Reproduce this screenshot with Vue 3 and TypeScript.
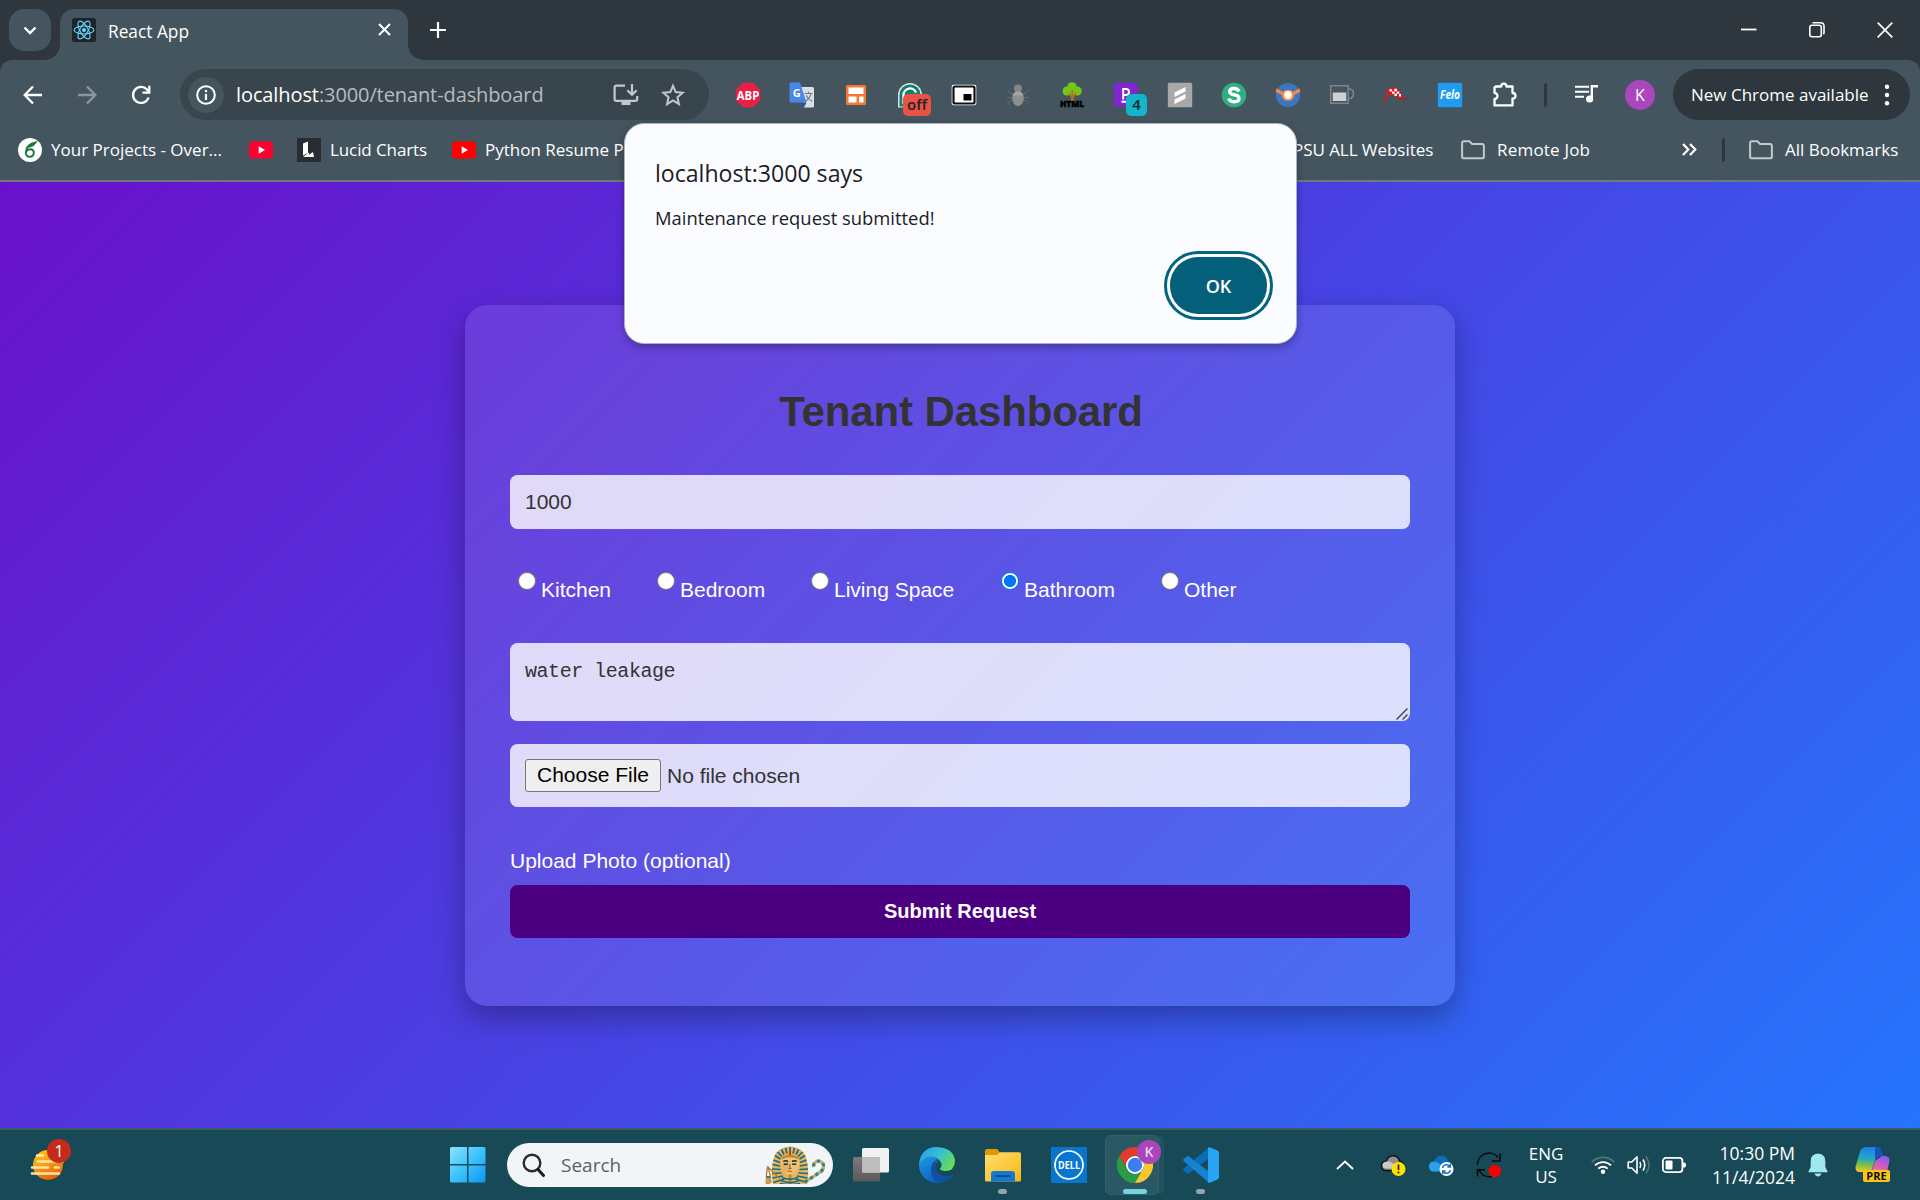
<script setup lang="ts">
import { ref } from 'vue'

interface Room {
  id: string
  label: string
  width: number
}

const rooms: Room[] = [
  { id: 'kitchen', label: 'Kitchen', width: 139 },
  { id: 'bedroom', label: 'Bedroom', width: 154 },
  { id: 'living', label: 'Living Space', width: 190 },
  { id: 'bathroom', label: 'Bathroom', width: 160 },
  { id: 'other', label: 'Other', width: 100 },
]
const selected = ref('bathroom')
const amount = ref('1000')
const details = ref('water leakage')
</script>

<template>
  <div class="screen">
    <header class="tabstrip">
      <button class="tab-search">
        <svg width="14" height="9" viewBox="0 0 14 9"><path d="M1.500 1.500 7 7l5.500-5.500" fill="none" stroke="#fff" stroke-width="2.400" /></svg>
      </button>
      <div class="tab">
        <svg class="favicon" width="24" height="24" viewBox="0 0 24 24">
          <rect width="24" height="24" rx="2.500" fill="#20232a" />
          <g fill="none" stroke="#61dafb" stroke-width="1.100">
            <ellipse cx="12" cy="12" rx="10" ry="4" />
            <ellipse cx="12" cy="12" rx="10" ry="4" transform="rotate(60 12 12)" />
            <ellipse cx="12" cy="12" rx="10" ry="4" transform="rotate(120 12 12)" />
          </g>
          <circle cx="12" cy="12" r="2" fill="#61dafb" />
        </svg>
        <span class="tab-title">React App</span>
        <svg class="tab-close" width="13" height="13" viewBox="0 0 13 13"><path d="M1 1l11 11M12 1 1 12" stroke="#fff" stroke-width="2" /></svg>
      </div>
      <svg class="new-tab" width="16" height="16" viewBox="0 0 16 16"><path d="M8 0v16M0 8h16" stroke="#fff" stroke-width="2.200" /></svg>
      <div class="window-controls">
        <svg width="16" height="16" viewBox="0 0 16 16"><path d="M0 7.500h15.500" stroke="#fff" stroke-width="1.800" /></svg>
        <svg width="16" height="16" viewBox="0 0 16 16"><g fill="none" stroke="#fff" stroke-width="1.600"><rect x=".8" y="3.300" width="11.500" height="11.500" rx="2.200" /><path d="M3.500 1.200Q4 .8 5 .8h6.500q3.500 0 3.500 3.500v6.200q0 1-.6 1.700" /></g></svg>
        <svg width="16" height="16" viewBox="0 0 16 16"><path d="M.7.700l14.600 14.600M15.300.700.700 15.300" stroke="#fff" stroke-width="1.700" /></svg>
      </div>
    </header>

    <nav class="toolbar">
      <div class="nav-buttons">
        <svg width="20" height="20" viewBox="0 0 20 20"><path d="M19 10H2M10 1.500 1.700 10l8.300 8.500" fill="none" stroke="#fff" stroke-width="2.300" /></svg>
        <svg width="20" height="20" viewBox="0 0 20 20"><path d="M1 10h17M10 1.500l8.300 8.500-8.300 8.500" fill="none" stroke="#8d989e" stroke-width="2.300" /></svg>
        <svg width="20" height="20" viewBox="0 0 20 20"><path d="M17.600 12.500A8 8 0 1 1 16 4.600l2 2.200" fill="none" stroke="#fff" stroke-width="2.300" /><path d="M18.300.800v6.900h-6.900" fill="none" stroke="#fff" stroke-width="2.200" /></svg>
      </div>
      <div class="omnibox">
        <span class="site-info">
          <svg width="20" height="20" viewBox="0 0 20 20"><circle cx="10" cy="10" r="8.800" fill="none" stroke="#fff" stroke-width="2" /><path d="M10 9v6M10 5v2.200" stroke="#fff" stroke-width="2.200" /></svg>
        </span>
        <span class="url"><b>localhost</b>:3000/tenant-dashboard</span>
        <svg class="install" width="26" height="22" viewBox="0 0 26 22"><g fill="none" stroke="#c4c8ca" stroke-width="2.200"><path d="M12 1.600H3.500q-1.900 0-1.900 1.900v11.500q0 1.900 1.900 1.900h18.800q1.900 0 1.900-1.900V12" /><path d="M19 0v10M14.300 6.200 19 10.800l4.700-4.600" /></g><path d="M8.500 17h9v4h-9z" fill="#c4c8ca" /></svg>
        <svg class="star" width="24" height="24" viewBox="0 0 24 24"><path d="M12 2.800l2.700 6.300 6.900.6-5.200 4.600 1.500 6.800L12 17.500l-5.900 3.600 1.500-6.800-5.200-4.600 6.900-.6z" fill="none" stroke="#c4c8ca" stroke-width="2" /></svg>
      </div>
      <div class="extensions">
        <span class="ext">
          <svg width="26" height="26" viewBox="0 0 26 26"><path d="M8 .7h10L25.300 8v10L18 25.300H8L.7 18V8z" fill="#ed1e45" /><text x="13" y="17.600" text-anchor="middle" font-size="12.500" font-weight="700" fill="#fff" textLength="22.500" lengthAdjust="spacingAndGlyphs">ABP</text></svg>
        </span>
        <span class="ext">
          <svg width="26" height="26" viewBox="0 0 26 26"><path d="M9 5h14.500q1.500 0 1.500 1.500V24q0 1.500-1.500 1.500H15z" fill="#dcdfe2" /><path d="M2 .5h9l6.500 20H2Q.5 20.500.5 19V2Q.5.500 2 .5z" fill="#4a86e8" /><path d="M12.500 20.500h5L15 25.500z" fill="#2b4fb0" /><path d="M15.500 11.500h8M19.500 9.500v2M22 11.500q-1 5-6 8M17.200 13.500q2 4 6 5.800" fill="none" stroke="#607d8b" stroke-width="1.200" /><text x="7.800" y="15" text-anchor="middle" font-size="11" font-weight="700" fill="#fff">G</text></svg>
        </span>
        <span class="ext">
          <svg width="20" height="20" viewBox="0 0 20 20"><rect width="20" height="20" rx="1" fill="#f27a35" /><path d="M2.500 2.500h15V9h-15zM2.500 11.500h8v6h-8zM13 11.500h4.500v6H13z" fill="#fff" /></svg>
        </span>
        <span class="ext">
          <svg width="26" height="26" viewBox="0 0 26 26"><path d="M1 25.500V13a12 12 0 0 1 24 0v12z" fill="#d9e5e2" /><path d="M2.500 24.500V13a10.500 10.500 0 0 1 21 0v11z" fill="#0f7f6e" /><path d="M6.500 22v-9a6.500 6.500 0 0 1 12.500-2.500" fill="none" stroke="#fff" stroke-width="2.300" /></svg>
          <i class="badge off">off</i>
        </span>
        <span class="ext">
          <svg width="26" height="22" viewBox="0 0 26 22"><rect x=".7" y=".7" width="24.600" height="20.600" rx="2" fill="#fff" /><rect x="2.500" y="2.500" width="21" height="17" rx="1.500" fill="#fff" stroke="#111" stroke-width="2.200" /><path d="M12.500 10h8v6.500h-8z" fill="#000" /></svg>
        </span>
        <span class="ext">
          <svg width="22" height="24" viewBox="0 0 22 24"><g fill="none" stroke="#626c71" stroke-width="1"><path d="M1 7q1 4 5 4M21 7q-1 4-5 4M0 14.500h6M22 14.500h-6M1 22q0-4 5-5M21 22q0-4-5-5" /></g><circle cx="11" cy="5.500" r="4" fill="#858585" /><ellipse cx="11" cy="15.500" rx="5.800" ry="7.500" fill="#8e8e8e" /><path d="M5.500 12.500Q7 8.500 11 8.500t5.500 4z" fill="#a5a5a5" /></svg>
        </span>
        <span class="ext">
          <svg width="26" height="26" viewBox="0 0 26 26"><g fill="#76c51a"><circle cx="13" cy="5" r="4.800" /><circle cx="8" cy="9" r="4.500" /><circle cx="18.300" cy="9" r="4.500" /><circle cx="13" cy="10" r="4" /></g><path d="M9 10l3.500 3V8h1.500v5l4-3.500-3 6.500v3h-3v-3z" fill="#b96b1c" /><text x="13" y="24.800" text-anchor="middle" font-size="8.500" font-weight="900" fill="#000" textLength="24" lengthAdjust="spacingAndGlyphs" stroke="#000" stroke-width=".5">HTML</text></svg>
        </span>
        <span class="ext">
          <svg width="26" height="26" viewBox="0 0 26 26"><rect x=".8" y=".8" width="24" height="24" rx="3" fill="#7f26cf" /><path d="M10.200 17.500V7h2.800q3 0 3 3t-3 3h-2.500M8.500 19.800h5" fill="none" stroke="#fff" stroke-width="2" /></svg>
          <i class="badge four">4</i>
        </span>
        <span class="ext">
          <svg width="26" height="26" viewBox="0 0 26 26"><rect x=".8" y=".8" width="24.400" height="24.400" rx="1.500" fill="#a8a8a8" /><path d="M18.500 5v4.500L7.500 15v-4.500zM18.500 12v4.500L7.500 22v-4.500z" fill="#fff" /></svg>
        </span>
        <span class="ext">
          <svg width="26" height="26" viewBox="0 0 26 26"><circle cx="13" cy="13" r="12.300" fill="#2fae80" /><path d="M18 9.500q-1.300-3-5-3-4.300 0-4.300 3.100 0 2.400 4.300 3.200 5 .8 5 3.700 0 3.200-5 3.200-4.200 0-5.300-3.200" fill="none" stroke="#fff" stroke-width="3.400" /></svg>
        </span>
        <span class="ext">
          <svg width="26" height="26" viewBox="0 0 26 26"><circle cx="13" cy="13" r="12" fill="#3a77c2" /><path d="M1.500 6.500 8 9.800q2-2 5-2t5 2l6.500-3.300 1 3.300-6 3q-.5 6.200-6.500 6.200t-6.500-6.200l-6-3z" fill="#f58a42" /><circle cx="13" cy="13" r="3.900" fill="#fff" /></svg>
        </span>
        <span class="ext">
          <svg width="26" height="22" viewBox="0 0 26 22"><path d="M1.700 1.700h17.500v17.500H1.700z" fill="none" stroke="#7e8588" stroke-width="1.500" /><path d="M3.800 8.500h13.500V17H3.800z" fill="#d0d0d0" /><path d="M19 5q5.500-.5 5.500 4.500T19 15" fill="none" stroke="#7e8588" stroke-width="1.600" /></svg>
        </span>
        <span class="ext">
          <svg width="26" height="18" viewBox="0 0 26 18"><path d="M5 3Q11-1 16.500 4.500L19.500 12q-4 .5-7.500-2T5.500 9L2 15.500H.8z" fill="#e3141b" /><g fill="#fff"><path d="M6.500 3.200h2.600v2.400H6.500zM11.300 2.800h2.600v2.400h-2.600zM9 5.400h2.600v2.400H9zM13.700 5.400h2.600v2.400h-2.600zM11.400 7.800H14v2.200h-2.600zM16 8h2v2.400h-2z" /></g><path d="M15 12q4.500 2.300 10 .8" fill="none" stroke="#b01f27" stroke-width="1.700" /></svg>
        </span>
        <span class="ext">
          <svg width="26" height="26" viewBox="0 0 26 26"><rect x=".8" y=".8" width="24.400" height="24.400" rx="1.500" fill="#1f9cf0" /><text x="13" y="17.200" text-anchor="middle" font-size="11.500" font-weight="700" font-style="italic" fill="#fff" textLength="20" lengthAdjust="spacingAndGlyphs">Felo</text></svg>
        </span>
        <span class="ext">
          <svg width="26" height="26" viewBox="0 0 26 26"><path d="M4.500 4.500h5.700q0-2.800 2.600-2.800t2.600 2.800h6.100v6.500q3 0 3 2.800t-3 2.800v6.800h-18v-6.200q3-.6 3-3.200t-3-3.200V5.500z" fill="none" stroke="#fff" stroke-width="2.300" stroke-linejoin="round" /></svg>
        </span>
      </div>
      <span class="divider tool-divider"></span>
      <svg class="media" width="24" height="19" viewBox="0 0 24 19"><path d="M0 1.700h14M0 6.700h14M0 11.700h9" stroke="#fff" stroke-width="2" /><path d="M16.800 14V1.300H23" fill="none" stroke="#fff" stroke-width="2.400" /><circle cx="14.600" cy="14" r="3.600" fill="#fff" /></svg>
      <span class="profile">K</span>
      <div class="update">
        <span>New Chrome available</span>
        <svg width="6" height="22" viewBox="0 0 6 22"><g fill="#fff"><circle cx="3" cy="2.700" r="2.200" /><circle cx="3" cy="11" r="2.200" /><circle cx="3" cy="19.300" r="2.200" /></g></svg>
      </div>
    </nav>

    <div class="bookmarks">
      <svg class="bm-overleaf" width="24" height="24" viewBox="0 0 24 24"><circle cx="12" cy="12" r="12" fill="#fff" /><path d="M17.500 4.500Q8 6.500 7.800 14.500q.2 4.300 4 4.300t4-3.900q0-3.700-3.600-3.700-3 0-4.200 3M10 8.500q3-3 7.500-4-2 3.300-5.500 4z" fill="none" stroke="#1a7a3c" stroke-width="1.900" /></svg>
      <span class="bm-projects">Your Projects - Over...</span>
      <svg class="bm-yt" width="24" height="18" viewBox="0 0 24 18"><rect y=".5" width="24" height="17" rx="4" fill="#ff0033" /><path d="M9.700 5.200v7.600L16 9z" fill="#fff" /></svg>
      <svg class="bm-lucid" width="24" height="24" viewBox="0 0 24 24"><path d="M0 0h24v24H0z" fill="#282c33" /><path d="M6 5.500 11 3.500V15l-5 2.500zM6 19l6-4.500v2.300l4-2.800 1 5z" fill="#fff" /></svg>
      <span class="bm-charts">Lucid Charts</span>
      <svg class="bm-yt2" width="24" height="18" viewBox="0 0 24 18"><rect y=".5" width="24" height="17" rx="3.500" fill="#f00" /><path d="M9.700 5.200v7.600L16 9z" fill="#fff" /></svg>
      <span class="bm-python">Python Resume P</span>
      <span class="bm-psu">PSU ALL Websites</span>
      <svg class="folder" width="24" height="20" viewBox="0 0 24 20"><path d="M3 1.300h5.500L11 4h10q1.900 0 1.900 1.900v10.500q0 1.900-1.900 1.900H3q-1.900 0-1.900-1.900V3.200Q1.100 1.300 3 1.300z" fill="none" stroke="#c4c8ca" stroke-width="2" /></svg>
      <span class="bm-remote">Remote Job</span>
      <svg class="chevrons" width="15" height="13" viewBox="0 0 15 13"><path d="M1 1l5.300 5.500L1 12M8 1l5.300 5.500L8 12" fill="none" stroke="#fff" stroke-width="2.200" /></svg>
      <span class="divider"></span>
      <svg class="folder all" width="24" height="20" viewBox="0 0 24 20"><path d="M3 1.300h5.500L11 4h10q1.900 0 1.900 1.900v10.500q0 1.900-1.900 1.900H3q-1.900 0-1.900-1.900V3.200Q1.100 1.300 3 1.300z" fill="none" stroke="#c4c8ca" stroke-width="2" /></svg>
      <span class="bm-all">All Bookmarks</span>
    </div>

    <main class="page">
      <section class="card">
        <h1>Tenant Dashboard</h1>
        <input v-model="amount" class="field amount" type="text" />
        <div class="rooms">
          <label v-for="room in rooms" :key="room.id" :style="{ width: room.width + 'px' }" @click="selected = room.id">
            <i class="radio" :class="{ on: selected === room.id }"></i>
            <span>{{ room.label }}</span>
          </label>
        </div>
        <div class="field details">
          <span>{{ details }}</span>
          <svg width="12" height="12" viewBox="0 0 12 12"><path d="M.5 11.500 11.500.5M6.500 11.500l5-5" stroke="#4a4a55" stroke-width="1.500" /></svg>
        </div>
        <div class="field file">
          <button class="choose">Choose File</button>
          <span>No file chosen</span>
        </div>
        <p class="upload">Upload Photo (optional)</p>
        <button class="submit">Submit Request</button>
      </section>
    </main>

    <footer class="taskbar">
      <span class="weather">
        <svg width="34" height="32" viewBox="0 0 34 32">
          <defs><linearGradient id="sun" x1="0" y1="0" x2=".5" y2="1"><stop offset="0" stop-color="#ffc81a" /><stop offset=".5" stop-color="#f9a012" /><stop offset="1" stop-color="#e8640a" /></linearGradient></defs>
          <circle cx="18" cy="16" r="15" fill="url(#sun)" />
          <g stroke="#ffe3a8" stroke-width="2.600" stroke-linecap="round"><path d="M7 6.500h6M8 12.500h27M2 18.500h16M25 18.500h4M2 24.500h27" /></g>
        </svg>
        <i class="count">1</i>
      </span>
      <svg class="start" width="36" height="36" viewBox="0 0 36 36">
        <defs><linearGradient id="win" x1="0" y1="0" x2="1" y2="1"><stop offset="0" stop-color="#8ce3ff" /><stop offset=".5" stop-color="#3cc3fb" /><stop offset="1" stop-color="#0a97f5" /></linearGradient></defs>
        <path d="M1.500 0H17v17H0V1.500Q0 0 1.500 0zM18.500 0h15.500q1.500 0 1.500 1.500V17h-17zM0 18.500h17v17H1.500Q0 35.500 0 34zM18.500 18.500h17V34q0 1.500-1.500 1.500H18.500z" fill="url(#win)" />
      </svg>
      <div class="search">
        <svg width="24" height="24" viewBox="0 0 24 24"><circle cx="10" cy="10" r="8.300" fill="none" stroke="#2b2b2b" stroke-width="2.400" /><path d="M16 16.500l5.500 6" stroke="#1d1d1d" stroke-width="3" stroke-linecap="round" /></svg>
        <span>Search</span>
        <svg class="pharaoh" width="60" height="38" viewBox="0 0 60 38">
          <path d="M8 38Q6 30 7 22 8 8 14 4 19 .5 25 .5T36 4q6 4 7 18 1 8-1 16z" fill="#e3b45a" />
          <g fill="none" stroke="#1b6a86" stroke-width="1.700">
            <path d="M25 7V1M22 7.500 20.500 2M28 7.500 29.500 2M19 8.500 16.500 3.500M31 8.500l2.500-5M17 10.500 12.500 6M33 10.500 37.500 6" />
            <path d="M15.500 13 10 9.500M34.500 13 40 9.500M15 16.500 8.500 14M35 16.500l6.500-2.500M15 20l-7.500-1.500M35 20l7.500-1.500M15.500 23.500 7 23M34.500 23.500 43 23M16.500 27 7 27.500M33.500 27l9.500.5M18 30 7.500 32M32 30l10.500 2M19.500 33 8 36.500M30.500 33 42 36.500" />
          </g>
          <path d="M17 11q8-4.500 16 0l.8 4q.8 7-3.300 11-2.500 2.800-5.500 2.800T19.500 26q-4.100-4-3.300-11z" fill="#efc27a" />
          <path d="M16.800 11q8.200-5 16.400 0v2.300q-8.200-4-16.400 0z" fill="#c2872b" />
          <path d="M25 15v10q-4 0-4 2.500Q17 25 16.500 18z" fill="#dba45a" opacity=".6" />
          <path d="M18.300 15.500q2.300-1.500 4.700 0M27 15.500q2.400-1.500 4.700 0M18.800 18.300h4M27.200 18.300h4" fill="none" stroke="#1c2f3a" stroke-width="1.500" />
          <path d="M25 18v4.500M23.500 22.500h3M22.800 25.300h4.400" stroke="#9c6420" stroke-width="1.100" />
          <path d="M25 4v5" stroke="#c0392b" stroke-width="2" />
          <path d="M23.500 28.500h3V38h-3z" fill="#c2872b" />
          <path d="M17 31.500q8 3.500 16 0M16 34.500q9 4 18 0M15 37.500q10 2 20 0" fill="none" stroke="#1b6a86" stroke-width="1.400" />
          <path d="M2.500 20.500l12 12M2.500 20.500Q1 28 1.500 37M3 21q2.500 7 3 16" fill="none" stroke="#b7792d" stroke-width="1.300" />
          <path d="M1 30.500h4.500V38H.5z" fill="#cf9a4c" />
          <path d="M1 31h4.500" stroke="#1b6a86" stroke-width="1.500" />
          <path d="M40 36 56 25.500q4.500-4.500 1.500-8.500-4-3.500-7.500-.5-2 2-1 4.500" fill="none" stroke="#d8aa4a" stroke-width="3.200" />
          <path d="M40 36 56 25.500q4.500-4.500 1.500-8.500-4-3.500-7.500-.5-2 2-1 4.500" fill="none" stroke="#1f86a8" stroke-width="3.200" stroke-dasharray="3 3.300" />
        </svg>
      </div>
      <div class="apps">
        <span class="app">
          <svg width="36" height="36" viewBox="0 0 36 36"><defs><linearGradient id="tvb" x1="0" y1="0" x2="0" y2="1"><stop offset="0" stop-color="#7b7b7b" /><stop offset="1" stop-color="#5a5a5a" /></linearGradient></defs><rect y="10" width="27" height="24.500" rx="1.500" fill="url(#tvb)" /><rect x="9" y="1" width="27" height="24.500" rx="1.500" fill="#f1f1f1" /><path d="M9 10h18v15.500H10.500Q9 25.500 9 24z" fill="#bdbdbd" /></svg>
        </span>
        <span class="app">
          <svg width="36" height="36" viewBox="0 0 36 36">
            <defs>
              <linearGradient id="eg1" x1="0" y1=".2" x2="1" y2=".7"><stop offset="0" stop-color="#28a2ea" /><stop offset=".5" stop-color="#35c1cf" /><stop offset="1" stop-color="#6be04c" /></linearGradient>
              <linearGradient id="eg2" x1="0" y1="0" x2=".5" y2="1"><stop offset="0" stop-color="#1b9be4" /><stop offset="1" stop-color="#0f62bd" /></linearGradient>
            </defs>
            <path d="M0 17Q3 8 12 9q7 1.500 6.500 6-6 4-3 11 3 6 10 8-3 2-7.500 2A18 18 0 0 1 0 17z" fill="url(#eg2)" />
            <path d="M12 21q.5-6.500 6.500-8-3 4-1.500 9 3 7 10.500 7 3.500 0 6-1.600 1.600-.4.800 1.100Q29 36 20 36q-8.500-4-8-15z" fill="#124f9c" />
            <path d="M0 17Q2 0 18 0q17 1 18 14-.5 10-9.500 10-5.500-.3-5.500-2.500 2.500-2.500 1-6Q18.500 9.500 11.500 9.500 3 10.500 0 17z" fill="url(#eg1)" />
          </svg>
        </span>
        <span class="app">
          <svg width="36" height="36" viewBox="0 0 36 36"><defs><linearGradient id="fo" x1="0" y1="0" x2="1" y2="1"><stop offset="0" stop-color="#ffdd70" /><stop offset="1" stop-color="#f8b713" /></linearGradient></defs><path d="M0 4q0-2 2-2h9q1.500 0 2.300 1.200L15 6v5H0z" fill="#dc9a0b" /><path d="M0 8h12l3-2.700h19.500Q36 5.300 36 7v26q0 1.500-1.500 1.500h-33Q0 34.500 0 33z" fill="url(#fo)" /><path d="M6 34.500V27q0-3 3-3h18q3 0 3 3v7.500z" fill="#1379d0" /><path d="M11 29h14" stroke="#0d4f94" stroke-width="1.800" stroke-linecap="round" /></svg>
          <i class="dot"></i>
        </span>
        <span class="app">
          <svg width="36" height="36" viewBox="0 0 36 36"><path d="M0 0h36v36H0z" fill="#0676ce" /><circle cx="18" cy="18" r="14" fill="none" stroke="#fff" stroke-width="1.700" /><text x="18" y="22" text-anchor="middle" font-size="11" font-weight="700" fill="#fff" textLength="22" lengthAdjust="spacingAndGlyphs">DELL</text></svg>
        </span>
        <span class="app active">
          <svg width="36" height="36" viewBox="0 0 36 36"><path d="M18 9h15.600A18 18 0 0 0 2.400 9l7.800 13.500A9 9 0 0 1 18 9z" fill="#e33b2e" /><path d="M10.200 22.500 2.400 9A18 18 0 0 0 18 36l7.800-13.500a9 9 0 0 1-15.600 0z" fill="#2b9b47" /><path d="M25.800 22.500 18 36A18 18 0 0 0 33.600 9H18a9 9 0 0 1 7.800 13.500z" fill="#fcc52c" /><circle cx="18" cy="18" r="9" fill="#fff" /><circle cx="18" cy="18" r="7.200" fill="#3c7df0" /></svg>
          <i class="app-badge">K</i>
          <i class="dot wide"></i>
        </span>
        <span class="app">
          <svg width="36" height="36" viewBox="0 0 36 36"><path d="M26 .3v11L5 27 .8 24q-1.300-1.200 0-2.400z" fill="#0a6cb5" /><path d="M.8 11.800 5 8.800l21 16V35.700L.8 14.200q-1.300-1.200 0-2.400z" fill="#1583cf" /><path d="M26 0l8.500 3.500Q36 4.200 36 6v24q0 1.800-1.500 2.500L26 36q-.8-.3-1-1V1q.2-.7 1-1z" fill="#27a5f2" /></svg>
          <i class="dot"></i>
        </span>
      </div>
      <div class="tray">
        <span class="slot"><svg width="18" height="10" viewBox="0 0 18 10"><path d="M1 9l8-7.500L17 9" fill="none" stroke="#fff" stroke-width="1.900" /></svg></span>
        <span class="slot"><svg width="26" height="22" viewBox="0 0 26 22"><path d="M6 16.500q-4.500-.5-4.500-4.800T6.300 7.200Q8 1.500 13.500 1.700q5 .3 6 5.300 4 .8 4 5t-4 4.500z" fill="#8f8f8f" stroke="#111" stroke-width="1.500" /><path d="M6.500 7.500q7-1 10 7H6q-3.500-.5-3.500-3.300t4-3.700z" fill="#c9c9c9" /><circle cx="18.500" cy="15" r="7" fill="#fde100" /><path d="M18.500 10.500v5.500M18.500 17.500v2" stroke="#222" stroke-width="1.700" /></svg></span>
        <span class="slot"><svg width="26" height="22" viewBox="0 0 26 22"><path d="M6 17.500q-5-.5-5-5t5-5Q8 1.500 13.500 1.700 19 2 20 7q4 1 4 5.500z" fill="#0f6cbd" /><path d="M5 17.500q-4-.7-4-5t5-5q3 0 5 2l9 6v2z" fill="#28a0ea" /><circle cx="18.500" cy="15" r="7" fill="#fff" /><path d="M14.500 14a4.200 4.200 0 0 1 7.500-1.500M22.500 16a4.200 4.200 0 0 1-7.500 1.500M22.300 10v3h-3M14.700 20v-3h3" fill="none" stroke="#1a6fc0" stroke-width="1.500" /></svg></span>
        <span class="slot"><svg width="26" height="26" viewBox="0 0 26 26"><path d="M1.500 12.500A11.500 11.500 0 0 1 22 5.500M24 1.500V9h-8M16 24.500Q7 26 3 18M1.500 24.500v-6.700h7.500" fill="none" stroke="#0b0b0b" stroke-width="1.600" /><circle cx="18.800" cy="19" r="6.200" fill="#f80000" /></svg></span>
        <span class="lang"><span>ENG</span><span>US</span></span>
        <svg class="wifi" width="24" height="18" viewBox="0 0 24 18"><g fill="none" stroke-width="1.800"><path d="M.8 6.200a15.500 15.500 0 0 1 22.400 0" stroke="#54767f" /><path d="M4 9.400a11.200 11.200 0 0 1 16 0M7.300 12.700a6.600 6.600 0 0 1 9.400 0" stroke="#fff" /></g><circle cx="12" cy="15.700" r="2.200" fill="#fff" /></svg>
        <svg class="speaker" width="24" height="20" viewBox="0 0 24 20"><g fill="none" stroke-width="1.600"><path d="M1.200 7h3.600L10 1.800v16.400L4.800 13H1.200z" stroke="#fff" stroke-linejoin="round" /><path d="M13 7q1.500 3 0 6M16 4.500q3.500 5.500 0 11" stroke="#fff" /><path d="M19 1.500q6 8.500 0 17" stroke="#54767f" /></g></svg>
        <svg class="battery" width="25" height="16" viewBox="0 0 25 16"><rect x=".9" y=".9" width="19.500" height="14.200" rx="3" fill="none" stroke="#fff" stroke-width="1.800" /><rect x="3.500" y="3.500" width="7" height="9" rx="1" fill="#fff" /><path d="M21 5.500h1.300q1.700 0 1.700 2.500t-1.700 2.500H21z" fill="#fff" /></svg>
        <span class="clock"><span>10:30 PM</span><span>11/4/2024</span></span>
        <svg class="bell" width="20" height="24" viewBox="0 0 20 24"><path d="M10 .5q7.300.5 7.300 7.500v6l2.200 4.500v.8H.5v-.8L2.700 14V8Q2.700 1 10 .5z" fill="#9fe9ee" /><path d="M6.500 20.500h7q-1 3-3.500 3t-3.500-3z" fill="#9fe9ee" /></svg>
        <span class="copilot">
          <svg width="36" height="36" viewBox="0 0 36 36">
            <defs>
              <linearGradient id="cp1" x1=".3" y1="0" x2=".2" y2="1"><stop offset="0" stop-color="#1d7fe6" /><stop offset=".45" stop-color="#22a6c8" /><stop offset=".7" stop-color="#7ac043" /><stop offset="1" stop-color="#f6c928" /></linearGradient>
              <linearGradient id="cp2" x1=".6" y1="0" x2=".3" y2="1"><stop offset="0" stop-color="#8a5cf0" /><stop offset=".5" stop-color="#e05bb5" /><stop offset="1" stop-color="#fb9a5c" /></linearGradient>
            </defs>
            <path d="M27 9h3q5 .5 4.500 5l-3 13q-1 3-5 3H15l5-16z" fill="url(#cp2)" />
            <path d="M11 0h11q3 .5 4 4l1.500 5H24q-3 .5-4 4l-3 9q-1 3-4 3H5q-5 0-4.500-5L4.500 6Q6 0 11 0z" fill="url(#cp1)" />
            <path d="M20 0h2q3 .5 4 4l1.500 5H24q-3 .2-4 3z" fill="#1b4fc4" />
          </svg>
          <i class="pre">PRE</i>
        </span>
      </div>
    </footer>

    <div class="dialog" role="dialog">
      <h2>localhost:3000 says</h2>
      <p>Maintenance request submitted!</p>
      <button class="ok">OK</button>
    </div>
  </div>
</template>

<style>
html,
body {
  margin: 0;
  overflow: hidden;
}
</style>

<style scoped>
.screen {
  position: relative;
  display: flex;
  flex-direction: column;
  width: 1920px;
  height: 1200px;
  overflow: hidden;
  color: #fff;
  background: #2d373d;
  font-family: 'Open Sans', 'Noto Sans', sans-serif;
}
.screen *,
.screen *::before {
  box-sizing: border-box;
}
svg {
  display: block;
  flex: none;
}
i {
  font-style: normal;
}
button {
  padding: 0;
  border: 0;
  font: inherit;
  color: inherit;
}
span {
  white-space: nowrap;
}

/* Tab strip */
.tabstrip {
  display: flex;
  height: 60px;
  padding-left: 9px;
}
.tab-search {
  display: flex;
  align-items: center;
  justify-content: center;
  width: 42px;
  height: 42px;
  margin: 9px 9px 0 0;
  border-radius: 15px;
  background: #44555f;
}
.tab {
  position: relative;
  display: flex;
  width: 348px;
  height: 51px;
  margin-top: 9px;
  padding: 9px 0 0 12px;
  border-radius: 14px 14px 0 0;
  background: #44555f;
}
.tab::before,
.tab::after {
  content: '';
  position: absolute;
  bottom: 0;
  width: 15px;
  height: 15px;
}
.tab::before {
  left: -15px;
  background: radial-gradient(circle at 0 0, transparent 14.500px, #44555f 15px);
}
.tab::after {
  right: -15px;
  background: radial-gradient(circle at 100% 0, transparent 14.500px, #44555f 15px);
}
.tab-title {
  margin-left: 12px;
  font-size: 17.300px;
  line-height: 27px;
}
.tab-close {
  margin: 5px 17px 0 auto;
}
.new-tab {
  margin: 22px 0 0 22px;
}
.window-controls {
  display: flex;
  gap: 52px;
  margin: 22px 27px 0 auto;
}

/* Toolbar */
.toolbar {
  display: flex;
  align-items: center;
  height: 69px;
  border-radius: 12px 12px 0 0;
  background: #44555f;
}
.nav-buttons {
  display: flex;
  gap: 34px;
  width: 180px;
  padding-left: 23px;
}
.omnibox {
  display: flex;
  align-items: center;
  width: 529px;
  height: 51px;
  padding-left: 8px;
  border-radius: 26px;
  background: #39454c;
}
.site-info {
  display: flex;
  align-items: center;
  justify-content: center;
  width: 36px;
  height: 36px;
  border-radius: 50%;
  background: #44555f;
}
.url {
  width: 389px;
  padding-left: 12px;
  color: #b6bcbf;
  font-size: 20px;
  letter-spacing: -0.100px;
}
.url b {
  color: #fff;
  font-weight: 400;
}
.star {
  margin-left: 22px;
}
.extensions {
  display: flex;
  margin-left: 12px;
}
.ext {
  position: relative;
  display: flex;
  align-items: center;
  justify-content: center;
  width: 54px;
  height: 30px;
}
.badge {
  position: absolute;
  top: 14px;
  height: 22px;
  border-radius: 5px;
  font-size: 15px;
  font-weight: 600;
  line-height: 21px;
  text-align: center;
  color: #1c2327;
}
.off {
  left: 20px;
  width: 28px;
  background: #ea5245;
}
.four {
  left: 27px;
  width: 21px;
  background: #12b5cb;
}
.divider {
  width: 3px;
  height: 24px;
  border-radius: 2px;
  background: #2d373d;
}
.tool-divider {
  margin-left: 13px;
}
.media {
  margin-left: 28px;
}
.profile {
  width: 30px;
  height: 30px;
  margin-left: 26px;
  border-radius: 50%;
  background: #ab47bc;
  font-size: 16px;
  line-height: 30px;
  text-align: center;
}
.update {
  display: flex;
  align-items: center;
  justify-content: space-between;
  width: 237px;
  height: 51px;
  margin-left: 18px;
  padding: 0 20px 0 18px;
  border-radius: 26px;
  background: #2d373d;
  font-size: 17px;
}

/* Bookmarks bar */
.bookmarks {
  display: flex;
  align-items: center;
  height: 53px;
  padding: 0 0 10px 18px;
  border-bottom: 2px solid #6c7a80;
  background: #44555f;
  font-size: 17px;
}
.bm-projects {
  width: 198px;
  margin-left: 9px;
}
.bm-lucid {
  margin-left: 24px;
}
.bm-charts {
  width: 122px;
  margin-left: 9px;
  letter-spacing: -0.100px;
}
.bm-python {
  width: 180px;
  margin-left: 9px;
}
.bm-psu {
  width: 140px;
  margin-left: 628px;
  letter-spacing: -0.050px;
}
.folder {
  margin-left: 28px;
}
.bm-remote {
  width: 185px;
  margin-left: 12px;
  letter-spacing: 0.200px;
}
.chevrons + .divider {
  margin-left: 25px;
}
.folder.all {
  margin-left: 24px;
}
.bm-all {
  margin-left: 12px;
}

/* Page */
.page {
  display: flex;
  justify-content: center;
  height: 946px;
  padding-top: 123px;
  background: linear-gradient(135deg, #6a11cb, #2575fc);
  font-family: 'Liberation Sans', Arial, sans-serif;
}
.card {
  display: flex;
  flex-direction: column;
  width: 990px;
  height: 701px;
  padding: 80px 45px 0;
  border-radius: 22px;
  background: rgba(255, 255, 255, 0.15);
  background: rgba(255, 255, 255, 0.1);
  box-shadow: 0 12px 30px rgba(0, 0, 0, 0.3);
}
.card h1 {
  height: 90px;
  margin: 0;
  padding-left: 2px;
  color: #333;
  font-size: 42px;
  font-weight: 700;
  letter-spacing: -0.120px;
  line-height: 53px;
  text-align: center;
}
.field {
  width: 900px;
  border: 0;
  border-radius: 7.500px;
  background: rgba(255, 255, 255, 0.8);
  color: #333;
}
.amount {
  height: 54px;
  padding: 0 15px;
  outline: none;
  font: 21px 'Liberation Sans', Arial, sans-serif;
}
.rooms {
  display: flex;
  height: 114px;
  padding: 43px 0 0 8px;
  font-size: 21px;
}
.rooms label {
  display: flex;
}
.rooms span {
  margin: 6px 0 0 5px;
  line-height: 24px;
}
.radio {
  flex: none;
  width: 18px;
  height: 18px;
  border: 1.500px solid #767676;
  border-radius: 50%;
  background: #fff;
}
.radio.on {
  border: 1.500px solid #0075ff;
  background: radial-gradient(circle, #0075ff 5.700px, #fff 6.300px);
}
.details {
  display: flex;
  align-items: flex-end;
  justify-content: space-between;
  height: 78px;
  padding: 0 2px 1px 15px;
  font: 20px 'Liberation Mono', monospace;
}
.details span {
  align-self: flex-start;
  margin-top: 17px;
  letter-spacing: -0.460px;
}
.file {
  display: flex;
  align-items: center;
  height: 63px;
  margin-top: 23px;
  padding-left: 15px;
  font-size: 21px;
}
.choose {
  width: 136px;
  height: 33px;
  margin-right: 6px;
  padding-bottom: 1px;
  border: 1.500px solid #767676;
  border-radius: 3px;
  background: #efefef;
  color: #000;
}
.upload {
  height: 78px;
  margin: 0;
  padding-top: 41px;
  font-size: 21px;
  line-height: 26px;
}
.submit {
  height: 53px;
  border-radius: 7.500px;
  background: #4b0082;
  color: #fff;
  font-size: 20px;
  font-weight: 700;
}

/* Taskbar */
.taskbar {
  display: flex;
  align-items: center;
  height: 72px;
  padding-bottom: 1px;
  border-top: 2px solid #3b5c65;
  background: #174957;
}
.weather {
  position: relative;
  width: 450px;
  padding-left: 30px;
}
.count {
  position: absolute;
  left: 47px;
  top: -10px;
  width: 24px;
  height: 24px;
  border-radius: 50%;
  background: #c42b1c;
  font-size: 16px;
  line-height: 24px;
  text-align: center;
}
.search {
  display: flex;
  align-items: center;
  width: 326px;
  height: 44px;
  margin-left: 21px;
  padding-left: 15px;
  border-radius: 22px;
  background: #f2f5f7;
  color: #5c5f61;
  font-size: 19px;
}
.search span {
  width: 203px;
  margin-left: 15px;
}
.pharaoh {
  margin-left: 1px;
}
.apps {
  display: flex;
  margin-left: 5px;
}
.app {
  position: relative;
  display: flex;
  align-items: center;
  justify-content: center;
  width: 66px;
  height: 60px;
}
.app svg {
  position: relative;
}
.active::before {
  content: '';
  position: absolute;
  left: 3px;
  top: 0;
  width: 54px;
  height: 60px;
  border: 1px solid #33606c;
  border-radius: 6px;
  background: #2a5863;
  box-shadow: 6px 0 0 -1px #22525f;
}
.app-badge {
  position: absolute;
  left: 35px;
  top: 5px;
  width: 24px;
  height: 24px;
  border-radius: 50%;
  background: #a946ba;
  color: #ead2ee;
  font-size: 14px;
  font-weight: 600;
  line-height: 24px;
  text-align: center;
}
.dot {
  position: absolute;
  left: 28px;
  bottom: 1px;
  width: 9px;
  height: 5px;
  border-radius: 3px;
  background: #90a6ad;
}
.dot.wide {
  left: 21px;
  width: 24px;
  background: #76d5dc;
}
.tray {
  display: flex;
  align-items: center;
  margin-left: 87px;
  font-size: 17px;
}
.slot {
  display: flex;
  justify-content: center;
  width: 48px;
}
.lang {
  display: flex;
  flex-direction: column;
  align-items: center;
  width: 66px;
  line-height: 23px;
}
.wifi {
  margin-left: 12px;
}
.speaker {
  margin-left: 12px;
}
.battery {
  margin-left: 11px;
}
.clock {
  display: flex;
  flex-direction: column;
  align-items: flex-end;
  width: 108px;
  font-size: 17.500px;
  line-height: 24px;
}
.bell {
  margin-left: 13px;
}
.copilot {
  position: relative;
  margin-left: 27px;
}
.pre {
  position: absolute;
  left: 8px;
  top: 23px;
  width: 27px;
  height: 12px;
  border-radius: 2px;
  background: #fcc419;
  color: #111;
  font-size: 11px;
  font-weight: 700;
  line-height: 12px;
  text-align: center;
}

/* Alert dialog */
.dialog {
  position: absolute;
  left: 624px;
  top: 123px;
  display: flex;
  flex-direction: column;
  width: 673px;
  height: 221px;
  padding: 32px 29px 0 30px;
  border: 1px solid #a9b1c4;
  border-radius: 20px;
  background: #fbfcff;
  box-shadow: 0 3px 8px rgba(0, 0, 0, 0.3);
  color: #1b1c1f;
}
.dialog h2 {
  margin: 0;
  font-size: 23.100px;
  font-weight: 400;
  line-height: 34px;
}
.dialog p {
  margin: 12px 0 0;
  font-size: 18.400px;
  line-height: 31px;
}
.ok {
  align-self: flex-end;
  width: 97px;
  height: 57px;
  margin-top: 24px;
  border-radius: 28px;
  background: #045f7a;
  box-shadow: 0 0 0 3px #fbfcff, 0 0 0 6px #04647f;
  color: #fff;
  font-size: 18px;
  font-weight: 600;
}
</style>
